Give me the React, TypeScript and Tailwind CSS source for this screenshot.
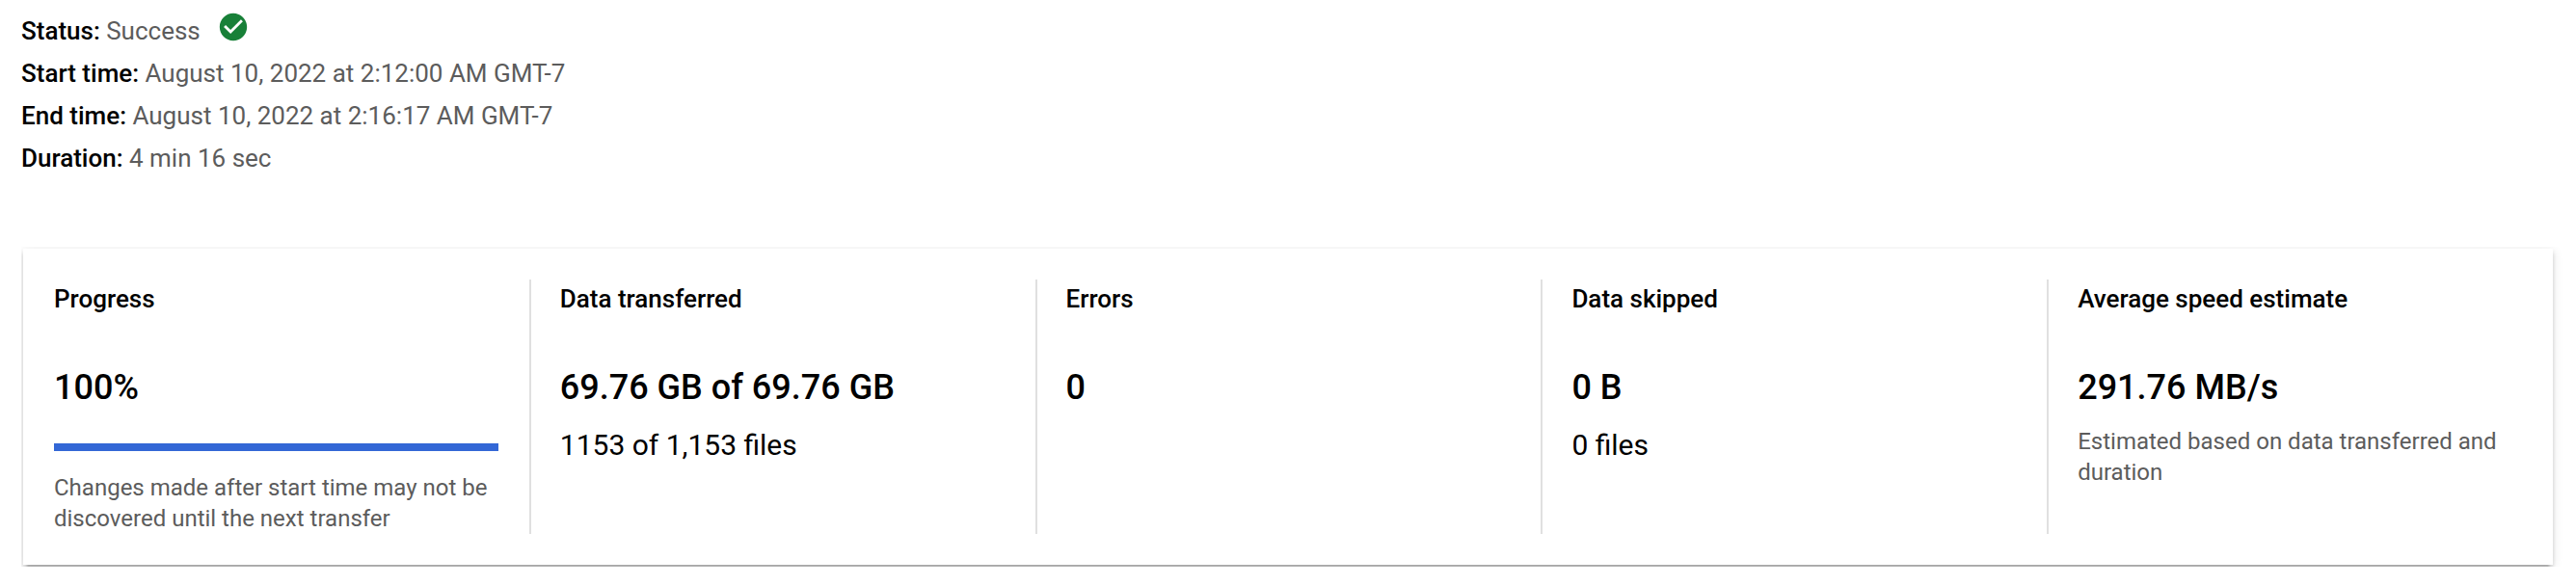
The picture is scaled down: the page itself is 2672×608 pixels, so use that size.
import React from "react";

const times = [
  ["Start time:", "August 10, 2022 at 2:12:00 AM GMT-7"],
  ["End time:", "August 10, 2022 at 2:16:17 AM GMT-7"],
  ["Duration:", "4 min 16 sec"],
];

function Panel({ title, value, children }: { title: string; value: string; children?: React.ReactNode }) {
  return (
    <section className="w-[524.8px] shrink-0 border-l-2 border-[#e0e0e0] pr-[32px] pl-[30px] first:border-l-0 first:pl-[32px]">
      <h2 className="h-[40px] text-[26px] leading-[40px] font-medium">{title}</h2>
      <p className="mt-[48px] h-[48px] text-[36px] leading-[48px] font-medium">{value}</p>
      {children}
    </section>
  );
}

export default function App() {
  return (
    <main className="h-[608px] w-[2672px] overflow-hidden bg-white pt-[10px] pl-[22px] font-['Roboto',sans-serif] text-black">
      <div className="flex h-[44px] items-center text-[26px] leading-[44px] text-[#5c5c5c]">
        <strong className="mr-[6.4px] font-medium text-black">Status:</strong>Success
        <svg className="-mt-[8px] ml-[17.6px] size-[34px]" viewBox="0 0 24 24" fill="#188038">
          <path d="M12 2C6.48 2 2 6.48 2 12s4.48 10 10 10 10-4.48 10-10S17.52 2 12 2zm-2 15-5-5 1.41-1.41L10 14.17l7.59-7.59L19 8l-9 9z" />
        </svg>
      </div>
      {times.map(([label, value]) => (
        <div key={label} className="h-[44px] text-[26px] leading-[44px] text-[#5c5c5c]">
          <strong className="font-medium text-black">{label}</strong> {value}
        </div>
      ))}
      <div className="mt-[70px] overflow-hidden py-[2px] pl-[2px]">
        <div className="flex h-[328px] w-[2624px] py-[32px] shadow-[0_6px_2px_-4px_rgba(0,0,0,0.2),0_4px_4px_0_rgba(0,0,0,0.14),0_2px_10px_0_rgba(0,0,0,0.12)]">
          <Panel title="Progress" value="100%">
            <div className="mt-[34px] h-[8px] bg-[#3367d6]" />
            <p className="mt-[22px] text-[24px] leading-[32px] text-[#5c5c5c]">Changes made after start time may not be discovered until the next transfer</p>
          </Panel>
          <Panel title="Data transferred" value="69.76 GB of 69.76 GB">
            <p className="mt-[16px] text-[30px] leading-[40px]">1153 of 1,153 files</p>
          </Panel>
          <Panel title="Errors" value="0" />
          <Panel title="Data skipped" value="0 B">
            <p className="mt-[16px] text-[30px] leading-[40px]">0 files</p>
          </Panel>
          <Panel title="Average speed estimate" value="291.76 MB/s">
            <p className="mt-[16px] text-[24px] leading-[32px] text-[#5c5c5c]">Estimated based on data transferred and duration</p>
          </Panel>
        </div>
      </div>
    </main>
  );
}
